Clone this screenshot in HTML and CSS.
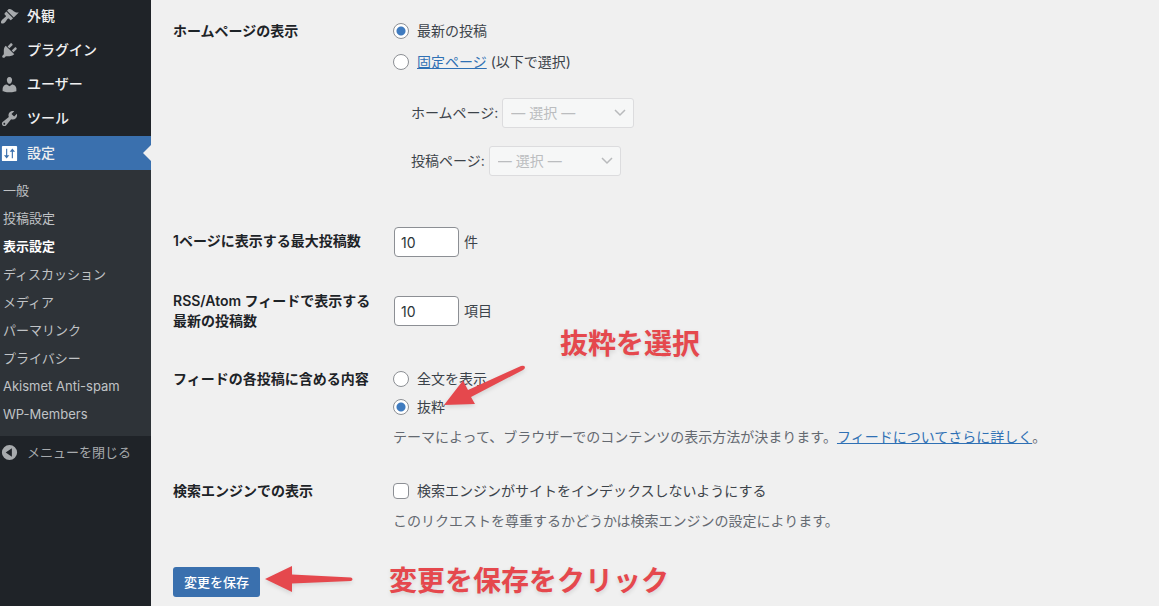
FILE: index.html
```html
<!DOCTYPE html>
<html lang="ja">
<head>
    <meta charset="UTF-8">
    <meta name="viewport" content="width=device-width, initial-scale=1.0">
    <title>表示設定</title>
    <link rel="stylesheet" href="styles.css">
</head>
<body>
    <div class="admin">
        <nav class="sidebar">
            <ul class="menu">
                <li><a href="#">
                    <svg class="icon" viewBox="0 0 20 20"><path d="M14.48 11.06L7.41 3.99l1.5-1.5c.5-.56 2.3-.47 3.51.32 1.21.8 1.43 1.28 2.91 2.1 1.18.64 2.45 1.26 4.45.85zm-.71.71L6.7 4.7 4.93 6.47c-.39.39-.39 1.02 0 1.41l1.06 1.06c.39.39.39 1.03 0 1.42-.6.6-1.43 1.11-2.21 1.69-.35.26-.7.53-1.01.84C1.43 14.23.4 16.08 1.4 17.07c.99 1 2.84-.03 4.18-1.36.31-.31.58-.66.85-1.02.57-.78 1.08-1.61 1.69-2.21.39-.39 1.02-.39 1.41 0l1.06 1.06c.39.39 1.02.39 1.41 0z"/></svg>
                    外観</a></li>
                <li><a href="#">
                    <svg class="icon" viewBox="0 0 20 20"><path d="M13.11 4.36L9.87 7.6 8 5.73l3.24-3.24c.35-.34 1.05-.2 1.56.32.52.51.66 1.21.31 1.55zm-8 1.77l.91-1.12 9.01 9.01-1.19.84c-.71.71-2.63 1.16-3.82 1.16H6.14L4.9 17.26c-.59.59-1.54.59-2.12 0-.59-.58-.59-1.53 0-2.12l1.24-1.24v-3.88c0-1.13.4-3.19 1.09-3.89zm7.26 3.97l3.24-3.24c.34-.35 1.04-.21 1.55.31.52.51.66 1.21.31 1.55l-3.24 3.25z"/></svg>
                    プラグイン</a></li>
                <li><a href="#">
                    <svg class="icon" viewBox="0 0 20 20"><path d="M10 9.25c-2.27 0-2.73-3.44-2.73-3.44C7 4.02 7.82 2 9.97 2c2.16 0 2.98 2.02 2.71 3.81 0 0-.41 3.44-2.68 3.44zm0 2.57L12.72 10c2.39 0 4.52 2.33 4.52 4.53v2.49s-3.65 1.13-7.24 1.13c-3.65 0-7.24-1.13-7.24-1.13v-2.49c0-2.25 1.94-4.48 4.47-4.48z"/></svg>
                    ユーザー</a></li>
                <li><a href="#">
                    <svg class="icon" viewBox="0 0 20 20"><path d="M16.68 9.77c-1.34 1.34-3.3 1.67-4.95.99l-5.41 6.52c-.99.99-2.59.99-3.58 0s-.99-2.59 0-3.57l6.52-5.42c-.68-1.65-.35-3.61.99-4.95 1.28-1.28 3.12-1.62 4.72-1.06l-2.89 2.89 2.82 2.82 2.86-2.87c.53 1.58.18 3.39-1.08 4.65zM3.81 16.21c.4.39 1.04.39 1.43 0 .4-.4.4-1.04 0-1.43-.39-.4-1.03-.4-1.43 0-.39.39-.39 1.03 0 1.43z"/></svg>
                    ツール</a></li>
                <li class="current"><a href="#">
                    <svg class="icon" viewBox="0 0 20 20"><path fill-rule="evenodd" d="M3 2h14a1 1 0 0 1 1 1v14a1 1 0 0 1-1 1H3a1 1 0 0 1-1-1V3a1 1 0 0 1 1-1zM6.400 5h1.200v6.800H9.800L7 15.200l-2.800-3.400h2.200zM12.400 15h1.200V8.200h2.200L13 4.800l-2.800 3.400h2.200z"/></svg>
                    設定</a></li>
            </ul>
            <ul class="submenu">
                <li><a href="#">一般</a></li>
                <li><a href="#">投稿設定</a></li>
                <li><a href="#" class="active">表示設定</a></li>
                <li><a href="#">ディスカッション</a></li>
                <li><a href="#">メディア</a></li>
                <li><a href="#">パーマリンク</a></li>
                <li><a href="#">プライバシー</a></li>
                <li><a href="#">Akismet Anti-spam</a></li>
                <li><a href="#">WP-Members</a></li>
            </ul>
            <button type="button" class="collapse">
                <svg class="icon" viewBox="0 0 20 20"><path fill-rule="evenodd" d="M10 2a8 8 0 1 1 0 16 8 8 0 0 1 0-16zM12.500 5.500L6 10l6.500 4.500z"/></svg>
                メニューを閉じる
            </button>
        </nav>

        <main class="content">
            <form>
                <table class="form-table">
                    <tr>
                        <th scope="row">ホームページの表示</th>
                        <td>
                            <label class="choice front"><input type="radio" name="front" checked>最新の投稿</label>
                            <div class="choice">
                                <input type="radio" name="front" id="frontPage">
                                <label for="frontPage"><a href="#">固定ページ</a> (以下で選択)</label>
                            </div>
                            <ul class="page-list">
                                <li>
                                    <label for="homePage">ホームページ:</label>
                                    <select id="homePage" disabled><option>— 選択 —</option></select>
                                </li>
                                <li>
                                    <label for="postPage">投稿ページ:</label>
                                    <select id="postPage" disabled><option>— 選択 —</option></select>
                                </li>
                            </ul>
                        </td>
                    </tr>
                    <tr>
                        <th scope="row"><label for="postsPerPage">1ページに表示する最大投稿数</label></th>
                        <td><div class="number"><input type="text" id="postsPerPage" value="10">件</div></td>
                    </tr>
                    <tr>
                        <th scope="row"><label for="postsPerRss">RSS/Atom フィードで表示する最新の投稿数</label></th>
                        <td><div class="number"><input type="text" id="postsPerRss" value="10">項目</div></td>
                    </tr>
                    <tr>
                        <th scope="row">フィードの各投稿に含める内容</th>
                        <td>
                            <label class="choice"><input type="radio" name="feed">全文を表示</label>
                            <label class="choice"><input type="radio" name="feed" checked>抜粋</label>
                            <p class="description">テーマによって、ブラウザーでのコンテンツの表示方法が決まります。<a href="#">フィードについてさらに詳しく</a>。</p>
                        </td>
                    </tr>
                    <tr>
                        <th scope="row">検索エンジンでの表示</th>
                        <td>
                            <label class="choice"><input type="checkbox" name="noindex">検索エンジンがサイトをインデックスしないようにする</label>
                            <p class="description">このリクエストを尊重するかどうかは検索エンジンの設定によります。</p>
                        </td>
                    </tr>
                </table>
                <button type="submit" class="save">変更を保存</button>
            </form>

            <!-- annotations over the form -->
            <strong class="note note-select">抜粋を選択</strong>
            <svg class="arrow arrow-select" width="90" height="56" viewBox="0 0 90 56"><path d="M3 44L22 19.500 27 29 80 5Q83 4 84 6 84 8 82 9L30 36 34 43Z"/></svg>
            <strong class="note note-save">変更を保存をクリック</strong>
            <svg class="arrow arrow-save" width="100" height="40" viewBox="0 0 100 40"><path d="M2 19L29 6 29 14.500 88 17.500Q91 19 88 21L29 23.500 29 32Z"/></svg>
        </main>
    </div>
</body>
</html>
```
FILE: styles.css
```css
* {
    box-sizing: border-box;
}
body {
    margin: 0;
    background-color: #f0f0f0;
    color: #3c434a;
    font-family: Inter, "Noto Sans CJK JP", sans-serif;
    font-size: 14px;
    line-height: 20px;
}
ul {
    margin: 0;
    padding: 0;
    list-style: none;
}
a {
    color: #2f70b4;
}
input, select, button {
    font: inherit;
}

/* Sidebar */
.admin {
    display: flex;
    min-height: 100vh;
}
.sidebar {
    flex: 0 0 151px;
    background-color: #1f2328;
}
.menu a, .collapse {
    display: flex;
    align-items: center;
    gap: 8px;
    width: 100%;
    height: 34px;
    padding: 0 0 2px;
    color: #f0f0f1;
    text-decoration: none;
}
.menu a {
    font-weight: 500;
}
.icon {
    flex: none;
    width: 19px;
    height: 19px;
    fill: #a7aaad;
}
.menu .current {
    position: relative;
    background-color: #3a70ae;
}
.menu .current a {
    padding: 0;
}
.menu .current .icon {
    fill: #fff;
}
.menu .current::after {
    content: "";
    position: absolute;
    top: 9px;
    right: 0;
    border: 8px solid transparent;
    border-left: 0;
    border-right-color: #f0f0f0;
}
.submenu {
    padding: 6px 0 8px;
    background-color: #2e3338;
    font-size: 13px;
}
.submenu a {
    display: block;
    padding: 4px 3px;
    color: #c0c3c6;
    text-decoration: none;
}
.submenu .active {
    color: #fff;
    font-weight: 700;
}
.collapse {
    border: none;
    background: none;
    color: #a7aaad;
    font-size: 13px;
    cursor: pointer;
}

/* Settings form */
.content {
    position: relative;
    flex: 1;
    min-width: 0;
    padding: 2px 22px 8px;
}
.form-table {
    width: 100%;
    border-collapse: collapse;
}
.form-table th {
    width: 220px;
    padding: 19px 20px 19px 0;
    color: #1d2327;
    font-weight: 600;
    text-align: left;
    vertical-align: top;
}
.form-table td {
    padding: 15px 0;
    vertical-align: middle;
}
.choice {
    display: flex;
    align-items: center;
    gap: 8px;
    height: 28px;
}
.front {
    margin-bottom: 3px;
}
input[type="radio"], input[type="checkbox"] {
    appearance: none;
    flex: none;
    width: 16px;
    height: 16px;
    margin: 0;
    border: 1px solid #8c8f94;
    border-radius: 4px;
    background-color: #fff;
}
input[type="radio"] {
    border-radius: 50%;
}
input[type="radio"]:checked {
    background-image: radial-gradient(circle, #3f7bbf 4px, transparent 5px);
}
.page-list {
    display: grid;
    gap: 18px;
    margin: 22px 0 21px 18px;
}
.page-list li {
    display: flex;
    align-items: center;
    gap: 4px;
}
select {
    appearance: none;
    width: 132px;
    height: 30px;
    padding: 0 24px 0 8px;
    border: 1px solid #dcdcde;
    border-radius: 3px;
    background: #f6f7f7 url("data:image/svg+xml,%3Csvg xmlns='http://www.w3.org/2000/svg' width='12' height='8'%3E%3Cpath d='M1 1l5 5 5-5' fill='none' stroke='%23b8babc' stroke-width='1.5'/%3E%3C/svg%3E") no-repeat right 7px center;
}
select:disabled {
    color: #bbbdbf;
    opacity: 1;
}
.number {
    display: flex;
    align-items: center;
    gap: 5px;
    padding-left: 1px;
}
.number input {
    width: 65px;
    height: 30px;
    padding: 0 6px;
    border: 1px solid #8c8f94;
    border-radius: 4px;
    background-color: #fff;
    color: #2c3338;
}
.description {
    margin: 5px 0 0;
    color: #646970;
    line-height: 21px;
}
.save {
    height: 30px;
    margin-top: 21px;
    padding: 0 11px;
    border: none;
    border-radius: 3px;
    background-color: #3a70ae;
    color: #fff;
    font-size: 13px;
    font-weight: 500;
    cursor: pointer;
}

/* Annotations */
.note {
    position: absolute;
    color: #e5484d;
    font-size: 28px;
    line-height: 40px;
    text-shadow: 0 2px 4px rgba(0, 0, 0, 0.12);
    white-space: nowrap;
}
.arrow {
    position: absolute;
    fill: #e5484d;
    filter: drop-shadow(0 2px 2px rgba(0, 0, 0, 0.12));
}
.note-select {
    top: 324px;
    left: 409px;
}
.arrow-select {
    top: 361px;
    left: 290px;
}
.note-save {
    top: 561px;
    left: 238px;
}
.arrow-save {
    top: 560px;
    left: 112px;
}
```
